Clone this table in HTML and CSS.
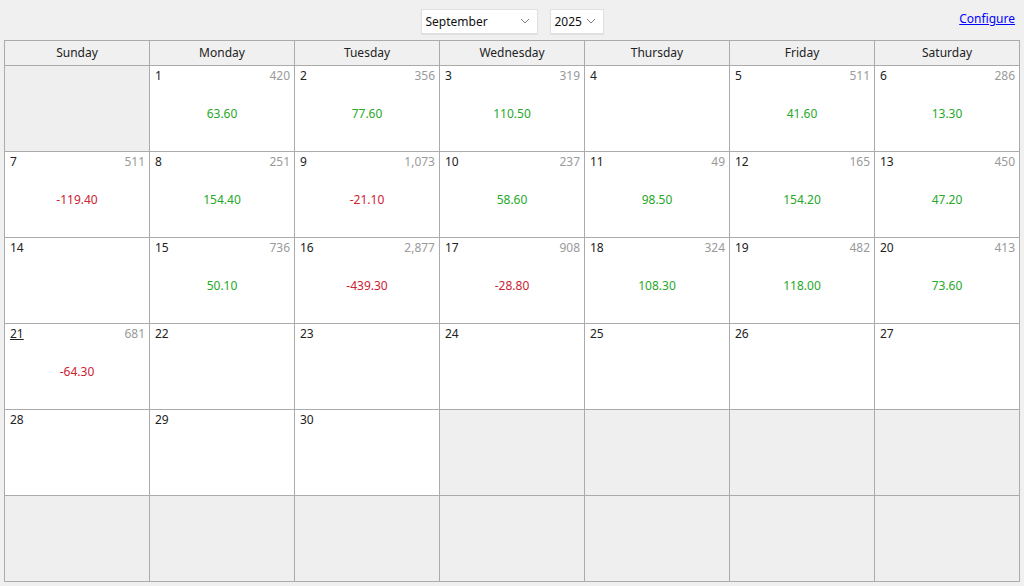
FILE: index.html
```html
<!DOCTYPE html>
<html>
<head>
<meta charset="utf-8">
<link rel="stylesheet" href="styles.css">
</head>
<body>
<div class="topbar">
  <div class="pickers">
    <div class="picker month"><span>September</span><svg width="10" height="6" viewBox="0 0 10 6"><path d="M1 1l4 4 4-4" fill="none" stroke="#808080" stroke-width="1"/></svg></div>
    <div class="picker year"><span>2025</span><svg width="10" height="6" viewBox="0 0 10 6"><path d="M1 1l4 4 4-4" fill="none" stroke="#808080" stroke-width="1"/></svg></div>
  </div>
  <a class="configure" href="#">Configure</a>
</div>
<div class="calendar">
  <div class="dow">Sunday</div><div class="dow">Monday</div><div class="dow">Tuesday</div><div class="dow">Wednesday</div><div class="dow">Thursday</div><div class="dow">Friday</div><div class="dow">Saturday</div>

  <div class="cell empty"></div>
  <div class="cell"><div class="head"><span class="num">1</span><span class="count">420</span></div><div class="val pos">63.60</div></div>
  <div class="cell"><div class="head"><span class="num">2</span><span class="count">356</span></div><div class="val pos">77.60</div></div>
  <div class="cell"><div class="head"><span class="num">3</span><span class="count">319</span></div><div class="val pos">110.50</div></div>
  <div class="cell"><div class="head"><span class="num">4</span><span class="count"></span></div></div>
  <div class="cell"><div class="head"><span class="num">5</span><span class="count">511</span></div><div class="val pos">41.60</div></div>
  <div class="cell"><div class="head"><span class="num">6</span><span class="count">286</span></div><div class="val pos">13.30</div></div>

  <div class="cell"><div class="head"><span class="num">7</span><span class="count">511</span></div><div class="val neg">-119.40</div></div>
  <div class="cell"><div class="head"><span class="num">8</span><span class="count">251</span></div><div class="val pos">154.40</div></div>
  <div class="cell"><div class="head"><span class="num">9</span><span class="count">1,073</span></div><div class="val neg">-21.10</div></div>
  <div class="cell"><div class="head"><span class="num">10</span><span class="count">237</span></div><div class="val pos">58.60</div></div>
  <div class="cell"><div class="head"><span class="num">11</span><span class="count">49</span></div><div class="val pos">98.50</div></div>
  <div class="cell"><div class="head"><span class="num">12</span><span class="count">165</span></div><div class="val pos">154.20</div></div>
  <div class="cell"><div class="head"><span class="num">13</span><span class="count">450</span></div><div class="val pos">47.20</div></div>

  <div class="cell"><div class="head"><span class="num">14</span><span class="count"></span></div></div>
  <div class="cell"><div class="head"><span class="num">15</span><span class="count">736</span></div><div class="val pos">50.10</div></div>
  <div class="cell"><div class="head"><span class="num">16</span><span class="count">2,877</span></div><div class="val neg">-439.30</div></div>
  <div class="cell"><div class="head"><span class="num">17</span><span class="count">908</span></div><div class="val neg">-28.80</div></div>
  <div class="cell"><div class="head"><span class="num">18</span><span class="count">324</span></div><div class="val pos">108.30</div></div>
  <div class="cell"><div class="head"><span class="num">19</span><span class="count">482</span></div><div class="val pos">118.00</div></div>
  <div class="cell"><div class="head"><span class="num">20</span><span class="count">413</span></div><div class="val pos">73.60</div></div>

  <div class="cell"><div class="head"><span class="num today">21</span><span class="count">681</span></div><div class="val neg">-64.30</div></div>
  <div class="cell"><div class="head"><span class="num">22</span><span class="count"></span></div></div>
  <div class="cell"><div class="head"><span class="num">23</span><span class="count"></span></div></div>
  <div class="cell"><div class="head"><span class="num">24</span><span class="count"></span></div></div>
  <div class="cell"><div class="head"><span class="num">25</span><span class="count"></span></div></div>
  <div class="cell"><div class="head"><span class="num">26</span><span class="count"></span></div></div>
  <div class="cell"><div class="head"><span class="num">27</span><span class="count"></span></div></div>

  <div class="cell"><div class="head"><span class="num">28</span><span class="count"></span></div></div>
  <div class="cell"><div class="head"><span class="num">29</span><span class="count"></span></div></div>
  <div class="cell"><div class="head"><span class="num">30</span><span class="count"></span></div></div>
  <div class="cell empty"></div>
  <div class="cell empty"></div>
  <div class="cell empty"></div>
  <div class="cell empty"></div>

  <div class="cell empty"></div>
  <div class="cell empty"></div>
  <div class="cell empty"></div>
  <div class="cell empty"></div>
  <div class="cell empty"></div>
  <div class="cell empty"></div>
  <div class="cell empty"></div>
</div>
</body>
</html>
```

FILE: styles.css
```css
html, body {
  margin: 0;
  padding: 0;
  background: #f0f0f0;
  font-family: "Noto Sans", "Open Sans", sans-serif;
  font-size: 12px;
  color: #222;
  width: 1024px;
  height: 586px;
  overflow: hidden;
}

.topbar {
  position: relative;
  height: 40px;
  display: flex;
  align-items: center;
  justify-content: center;
}

.pickers {
  display: flex;
  gap: 12px;
  margin-top: 2px;
}

.picker {
  box-sizing: border-box;
  height: 25px;
  background: #fff;
  border: 1px solid #e0e0e0;
  box-shadow: 0 1px 1px rgba(0,0,0,0.06);
  display: flex;
  align-items: center;
  justify-content: space-between;
  padding: 0 7px 0 4px;
  color: #111;
}

.picker.month { width: 117px; }
.picker.year { width: 54px; }

.configure {
  position: absolute;
  right: 9px;
  top: 10px;
  color: #0000ff;
  text-decoration: underline;
  font-size: 12px;
}

.calendar {
  margin: 0 4px;
  width: 1016px;
  box-sizing: border-box;
  display: grid;
  grid-template-columns: repeat(7, 144px);
  grid-template-rows: 24px repeat(6, 85px);
  gap: 1px;
  background: #ababab;
  border: 1px solid #ababab;
}

.dow {
  background: #f0f0f0;
  display: flex;
  align-items: center;
  justify-content: center;
  color: #222;
  padding-bottom: 1px;
}

.cell {
  background: #fff;
  padding: 2px 4px 0 5px;
}

.cell.empty {
  background: #efefef;
}

.head {
  display: flex;
  justify-content: space-between;
  line-height: 16px;
}

.num { color: #222; }
.num.today { text-decoration: underline; }

.count { color: #9a9a9a; }

.val {
  text-align: center;
  line-height: 16px;
  margin-top: 22px;
  margin-left: -1px;
}

.val.pos { color: #26a828; }
.val.neg { color: #cc2233; }
```
